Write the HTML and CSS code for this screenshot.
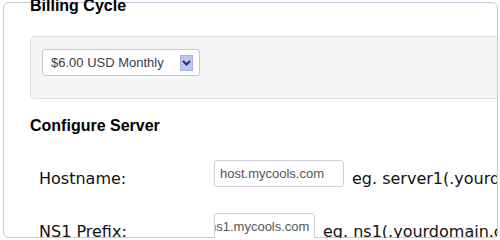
FILE: index.html
```html
<!DOCTYPE html>
<html>
	<head>
		<meta charset="utf-8">
		<title>Configure</title>
		<link rel="stylesheet" href="styles.css">
	</head>
	<body>
		<div class="panel">
			<h2 class="title first">Billing Cycle</h2>
			<div class="cycle-box">
				<div class="select">
					<span class="select-text">$6.00 USD Monthly</span>
					<span class="select-btn">
						<svg width="9" height="6" viewBox="0 0 9 6"><path d="M1 1 L4.5 4.5 L8 1" fill="none" stroke="#27325e" stroke-width="2"/></svg>
					</span>
				</div>
			</div>
			<h2 class="title">Configure Server</h2>
			<div class="rows">
				<div class="row">
					<div class="label">Hostname:</div>
					<div class="field host">host.mycools.com</div>
					<div class="hint">eg. server1(.yourdomain.com)</div>
				</div>
				<div class="row">
					<div class="label">NS1 Prefix:</div>
					<div class="field ns">ns1.mycools.com</div>
					<div class="hint">eg. ns1(.yourdomain.com)</div>
				</div>
			</div>
		</div>
	</body>
</html>
```

FILE: styles.css
```css
*{
	margin: 0;
	padding: 0;
	box-sizing: border-box;
}
body{
	background: #fff;
	font-family: "DejaVu Sans", Verdana, sans-serif;
	color: #111;
}
.panel{
	margin: 2px 0 0 3px;
	width: 495px;
	height: 236px;
	border: 1px solid #c6c9db;
	border-radius: 6px;
	padding-left: 26px;
}
.title{
	font-family: "Liberation Sans", Arial, sans-serif;
	font-weight: bold;
	font-size: 16px;
	line-height: 18px;
	color: #000;
	margin-top: 18px;
}
.title.first{
	margin-top: -6px;
}
.cycle-box{
	margin-top: 21px;
	height: 63px;
	border: 1px solid #dddde6;
	border-right: none;
	border-radius: 5px 0 0 5px;
	background: #f5f5f8;
	padding: 12px 0 0 11px;
}
.select{
	width: 158px;
	height: 27px;
	border: 1px solid #c6c6d2;
	border-radius: 3px;
	background: #fff;
	display: flex;
	align-items: center;
	padding-left: 8px;
}
.select-text{
	font-family: "Liberation Sans", Arial, sans-serif;
	font-size: 13px;
	color: #3c3c4c;
}
.select-btn{
	margin-left: auto;
	margin-right: 6px;
	width: 13px;
	height: 16px;
	background: #b9c7ef;
	border: 1px solid #a3b4e2;
	display: flex;
	align-items: center;
	justify-content: center;
}
.rows{
	margin-top: 25px;
	overflow: hidden;
}
.row{
	display: flex;
	align-items: flex-end;
	height: 27px;
	margin-bottom: 26px;
	white-space: nowrap;
}
.label{
	flex-shrink: 0;
	width: 175px;
	margin-left: 9px;
	font-size: 16px;
	line-height: 17px;
}
.field{
	flex-shrink: 0;
	height: 27px;
	border: 1px solid #cfcfd9;
	border-radius: 3px;
	background: #fff;
	font-family: "Liberation Sans", Arial, sans-serif;
	font-size: 13px;
	line-height: 25px;
	color: #555;
	padding-left: 5px;
	overflow: hidden;
}
.host{
	width: 130px;
}
.ns{
	width: 101px;
	text-indent: -11px;
}
.hint{
	flex-shrink: 0;
	margin-left: 8px;
	font-size: 16px;
	line-height: 17px;
}
```
